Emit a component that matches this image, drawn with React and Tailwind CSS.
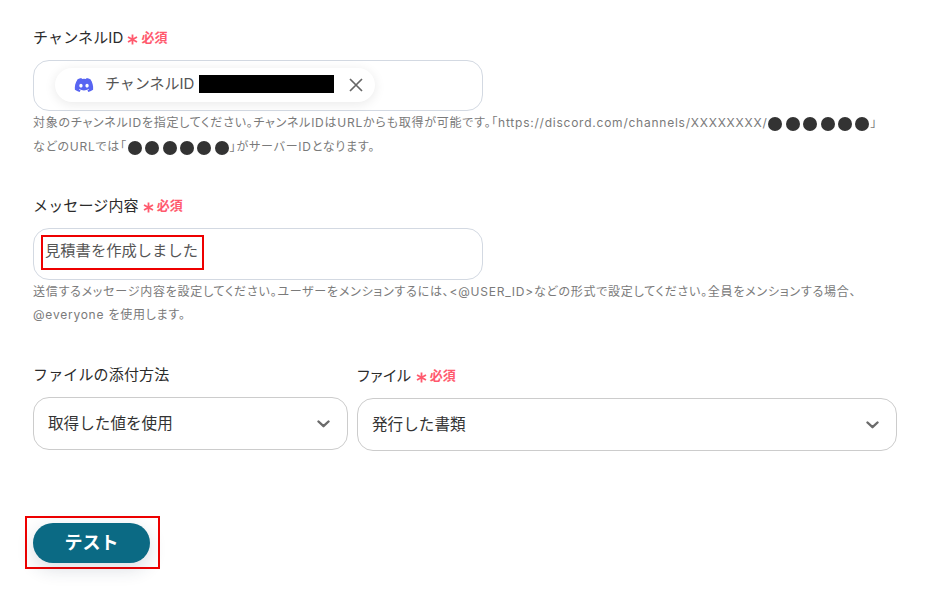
import React from 'react';
import { FaDiscord } from 'react-icons/fa';

const FONT = "font-['Inter','Noto_Sans_CJK_JP',sans-serif]";
const HELP = "text-[12px] leading-[24px] text-[#7a7a7a] whitespace-nowrap tracking-[0.765px] [font-feature-settings:'palt']";

function Required() {
  return (
    <span className="ml-[4px] inline-flex items-center text-[#ff5a6e] tracking-normal">
      <svg className="mt-[3px]" width="11" height="11" viewBox="0 0 11 11" fill="none">
        <path d="M5.5 0.5 V10.5 M1 3 L10 8 M10 3 L1 8" stroke="#ff5a6e" strokeWidth="1.8" />
      </svg>
      <span className="ml-[3px] text-[13px] font-semibold">必須</span>
    </span>
  );
}

function FieldLabel({ children, required, className = 'tracking-[0.01em]' }) {
  return (
    <div className={`flex items-center h-[24px] text-[15px] font-normal text-[#2b2b2b] ${className}`}>
      {children}
      {required && <Required />}
    </div>
  );
}

function Dots() {
  return (
    <span className="inline-flex items-center align-middle h-[12px] gap-[3.4px] mx-[1px]">
      {[0, 1, 2, 3, 4, 5].map((i) => (
        <span key={i} className="inline-block w-[14px] h-[14px] rounded-full bg-[#333333]" />
      ))}
    </span>
  );
}

function Chevron() {
  return (
    <svg width="13" height="8" viewBox="0 0 13 8" fill="none">
      <path d="M1.5 1.5 L6.5 6.2 L11.5 1.5" stroke="#6b6b6b" strokeWidth="2.4" strokeLinecap="round" strokeLinejoin="round" />
    </svg>
  );
}

function SelectBox({ value, className }) {
  return (
    <div className={`flex items-center justify-between h-[53px] pl-[14px] pr-[17px] rounded-[16px] border border-[#cccccc] text-[15.6px] text-[#333333] ${className}`}>
      <span>{value}</span>
      <Chevron />
    </div>
  );
}

export default function App() {
  return (
    <div className={`${FONT} relative w-[927px] h-[592px] overflow-hidden bg-white pt-[26px] pl-[33px]`}>
      <FieldLabel required>チャンネルID</FieldLabel>

      <div className="mt-[10px] flex items-center w-[450px] h-[51px] pl-[21px] pb-[2px] rounded-[16px] border border-[#d3d9e2]">
        <div className="flex items-center w-[320px] h-[34px] pl-[19px] rounded-full bg-white shadow-[0_2px_12px_rgba(0,0,0,0.09)]">
          <FaDiscord className="text-[#5865f2] text-[20px]" />
          <span className="ml-[11px] -mt-px text-[15px] text-[#555555]">チャンネルID</span>
          <span className="ml-[5px] -mt-[2px] w-[135px] h-[18px] bg-black" />
          <svg className="ml-[15px]" width="14" height="14" viewBox="0 0 14 14" fill="none">
            <path d="M1 1 L13 13 M13 1 L1 13" stroke="#666666" strokeWidth="1.7" />
          </svg>
        </div>
      </div>

      <div className={HELP}>
        <div>対象のチャンネルIDを指定してください。チャンネルIDはURLからも取得が可能です。「https://discord.com/channels/XXXXXXXX/<Dots />」</div>
        <div>などのURLでは「<Dots />」がサーバーIDとなります。</div>
      </div>

      <div className="mt-[35px]">
        <FieldLabel required>メッセージ内容</FieldLabel>
      </div>

      <div className="mt-[10px] w-[450px] h-[52px] pl-[7px] pt-[6px] rounded-[16px] border border-[#d3d9e2]">
        <div className="flex items-center h-[35px] w-[163px] pl-[2px] pb-[2px] border-2 border-[#ee0000] text-[15.3px] text-[#555555] whitespace-nowrap">
          見積書を作成しました
        </div>
      </div>

      <div className={HELP}>
        <div>送信するメッセージ内容を設定してください。ユーザーをメンションするには、&lt;@USER_ID&gt;などの形式で設定してください。全員をメンションする場合、</div>
        <div className="-mt-px">@everyone を使用します。</div>
      </div>

      <div className="mt-[36px] flex gap-[9px]">
        <div className="w-[315px]">
          <FieldLabel>ファイルの添付方法</FieldLabel>
          <SelectBox value="取得した値を使用" className="mt-[10px]" />
        </div>
        <div className="w-[540px] mt-px">
          <FieldLabel required className="tracking-[0.7px] [font-feature-settings:'palt']">ファイル</FieldLabel>
          <SelectBox value="発行した書類" className="mt-[10px]" />
        </div>
      </div>

      <div className="mt-[65px] -ml-[8px] flex items-center pl-[6px] w-[135px] h-[53px] border-2 border-[#ee0000]">
        <button className="w-[117px] h-[40px] rounded-full bg-[#0b6a84] text-white text-[18px] font-bold shadow-[0_6px_18px_rgba(30,50,80,0.16)]">
          テスト
        </button>
      </div>
    </div>
  );
}
